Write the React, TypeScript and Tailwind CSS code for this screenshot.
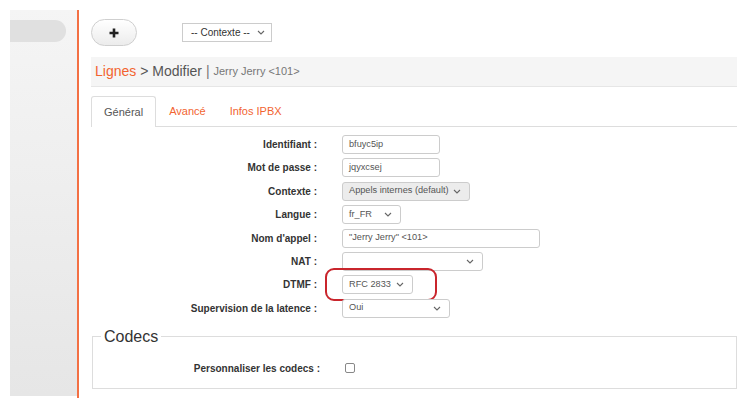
const fields = [
  { label: "Identifiant :", value: "bfuyc5ip", width: "w-[98px]", kind: "input" },
  { label: "Mot de passe :", value: "jqyxcsej", width: "w-[98px]", kind: "input" },
  { label: "Contexte :", value: "Appels internes (default)", width: "w-[128px]", kind: "select", disabled: true },
  { label: "Langue :", value: "fr_FR", width: "w-[59px]", kind: "select" },
  { label: "Nom d'appel :", value: "\"Jerry Jerry\" <101>", width: "w-[198px]", kind: "input" },
  { label: "NAT :", value: "", width: "w-[141px]", kind: "select" },
  { label: "DTMF :", value: "RFC 2833", width: "w-[71px]", kind: "select", circled: true },
  { label: "Supervision de la latence :", value: "Oui", width: "w-[108px]", kind: "select" },
];

function Chevron() {
  return (
    <svg width="8" height="5" viewBox="0 0 8 5" className="shrink-0">
      <path d="M1 1l3 3 3-3" fill="none" stroke="#666" strokeWidth="1.1" />
    </svg>
  );
}

function Field({ value, width, kind, disabled }: { value: string; width: string; kind: string; disabled?: boolean }) {
  return (
    <div
      className={`${width} h-[19px] flex items-center justify-between gap-1 pl-[6px] pr-[8px] border border-[#cccccc] rounded-[3px] text-[9.2px] text-[#555] ${
        disabled ? "bg-[#ececec]" : "bg-white"
      }`}
    >
      <span className="whitespace-nowrap">{value}</span>
      {kind === "select" && <Chevron />}
    </div>
  );
}

export default function App() {
  return (
    <div className="w-[748px] h-[407px] bg-white flex overflow-hidden font-['Liberation_Sans',Arial,sans-serif]">
      {/* sidebar */}
      <div className="ml-[10px] mt-[10px] w-[69px] h-[388px] border-r-2 border-[#f37044] flex">
        <div className="w-[67px] h-[386px] bg-gradient-to-b from-[#f5f5f5] to-[#e6e6e6] pt-[10px]">
          <div className="w-[56px] h-[22px] bg-[#e0e0e0] rounded-r-full" />
        </div>
      </div>

      {/* main */}
      <div className="flex-1 pl-[12px] pr-[11px] pt-[19px] flex flex-col">
        <div className="flex items-center h-[27px]">
          <button className="w-[46px] h-[27px] rounded-full border border-[#cfcfcf] bg-gradient-to-b from-white to-[#ececec] flex items-center justify-center">
            <svg width="10" height="10" viewBox="0 0 10 10">
              <path d="M5 0.5v9M0.5 5h9" stroke="#222" strokeWidth="2.6" />
            </svg>
          </button>
          <div className="ml-[45px] w-[90px] h-[19px] border border-[#cccccc] bg-white flex items-center justify-between pl-[8px] pr-[6px] text-[10px] text-[#333]">
            <span>-- Contexte --</span>
            <Chevron />
          </div>
        </div>

        <div className="mt-[11px] h-[30px] bg-[#f5f5f5] border-b border-[#e6e6e6] flex items-center pl-[4px]">
          <span className="text-[14px] text-[#f26430]">Lignes</span>
          <span className="text-[14px] text-[#555] whitespace-pre"> &gt; Modifier </span>
          <span className="text-[14px] text-[#777] whitespace-pre">| </span>
          <span className="text-[11px] text-[#777]">Jerry Jerry &lt;101&gt;</span>
        </div>

        <div className="mt-[9px] h-[31px] flex border-b border-[#dddddd] text-[11px]">
          <div className="px-3 h-[31px] flex items-center bg-white border border-b-0 border-[#dddddd] rounded-t-[3px] text-[#555] -mb-px">
            Général
          </div>
          <div className="px-3 ml-px flex items-center text-[#f26430]">Avancé</div>
          <div className="px-3 flex items-center text-[#f26430]">Infos IPBX</div>
        </div>

        <div className="pt-[8px] grid grid-cols-[226px_1fr] gap-x-[25px] gap-y-[4.4px]">
          {fields.map((f) => (
            <div key={f.label} className="contents">
              <div className="h-[19px] flex items-center justify-end text-[10px] font-bold text-[#333] whitespace-nowrap">
                {f.label}
              </div>
              <div className="relative h-[19px] flex items-center">
                <Field value={f.value} width={f.width} kind={f.kind} disabled={f.disabled} />
                {f.circled && (
                  <div className="absolute left-[-17px] top-[-7px] w-[112px] h-[33px] border-2 border-[#c9252c] rounded-[9px]" />
                )}
              </div>
            </div>
          ))}
        </div>

        <fieldset className="mt-[10px] ml-px border border-[#dddddd] pt-[13px] pb-[10px]">
          <legend className="ml-[8px] px-[3px] text-[16px] leading-[18px] text-[#333]">Codecs</legend>
          <div className="flex items-center h-[19px]">
            <div className="w-[227px] text-right text-[10px] font-bold text-[#333] whitespace-nowrap">
              Personnaliser les codecs :
            </div>
            <div className="ml-[25px] w-[10px] h-[10px] border border-[#888] rounded-[2px] bg-white" />
          </div>
        </fieldset>
      </div>
    </div>
  );
}
